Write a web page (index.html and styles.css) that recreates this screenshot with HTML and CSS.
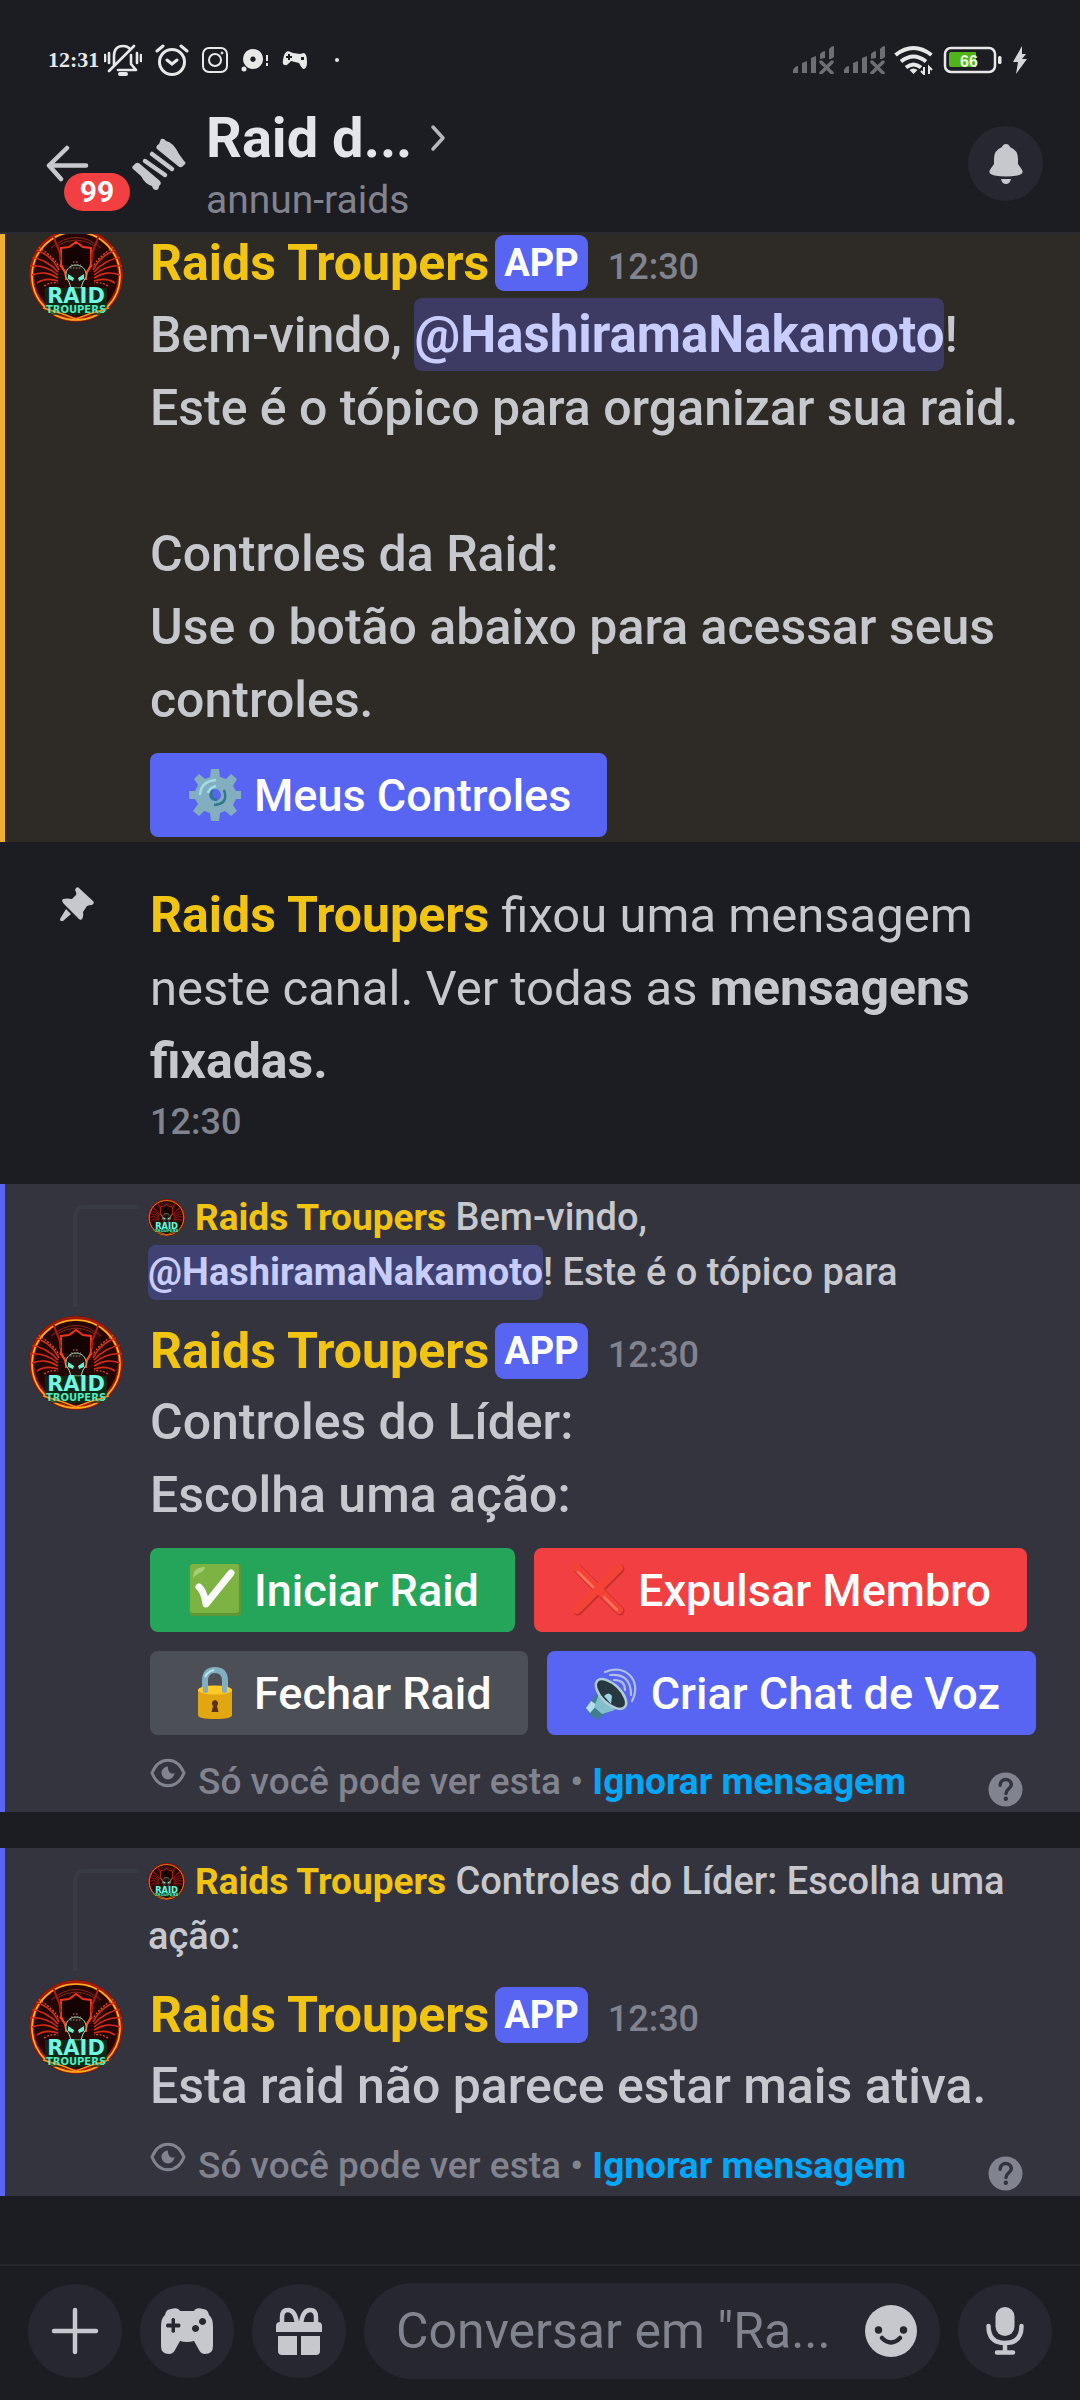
FILE: index.html
```html
<!DOCTYPE html>
<html lang="pt-BR">
<head>
<meta charset="utf-8">
<meta name="viewport" content="width=device-width, initial-scale=1">
<title>Raid – annun-raids</title>
<link rel="stylesheet" href="styles.css">
</head>
<body>
<svg class="defs" aria-hidden="true">
  <defs>
    <clipPath id="round"><circle cx="47" cy="47" r="47"/></clipPath>
    <symbol id="avatar" viewBox="0 0 94 94">
      <g clip-path="url(#round)">
        <circle cx="47" cy="47" r="47" fill="#240503"/>
        <circle cx="47" cy="47" r="44.500" fill="none" stroke="#a01a06" stroke-width="5"/>
        <circle cx="47" cy="48" r="44" fill="none" stroke="#ffb01f" stroke-width="1.600"/>
        <path d="M22 20Q47 -1 72 20M28 18Q47 6 66 18" fill="none" stroke="#8a2a10" stroke-width="1"/>
        <path d="M32 20l8-1 7-5 7 5 8 1v14c0 8-6 12-15 18-9-6-15-10-15-18z" fill="#150202" stroke="#f0331c" stroke-width="2"/>
        <path d="M25 9c2 10 8 14 6 24M69 9c-2 10-8 14-6 24" fill="none" stroke="#a61d0e" stroke-width="2"/>
        <path d="M3 20c9 4 18 6 27 22M1 29c9 1 18 4 28 15M1 38c10-1 18 1 28 9M3 47c9-3 16-3 26 3M8 55c6-4 12-5 21-2M91 20c-9 4-18 6-27 22M93 29c-9 1-18 4-28 15M93 38c-10-1-18 1-28 9M91 47c-9-3-16-3-26 3M86 55c-6-4-12-5-21-2" fill="none" stroke="#d42b17" stroke-width="1.600"/>
        <path d="M7 17c10 8 18 12 23 22M87 17c-10 8-18 12-23 22M15 58c5-3 9-4 14-3M79 58c-5-3-9-4-14-3" fill="none" stroke="#e05a32" stroke-width="1.200" stroke-dasharray="2 1.500"/>
        <path d="M31 37q6 5 6 15M63 37q-6 5-6 15" fill="none" stroke="#ff4326" stroke-width="2"/>
        <path d="M37 49c-2-16 22-16 20 0l-3 5-2 6H42l-2-6z" fill="#1f1210" stroke="#8fdcae" stroke-width="1"/>
        <path d="M39 46l6 4-1 3-5-2zM55 46l-6 4 1 3 5-2z" fill="#6ff0cd"/>
        <path d="M41 40h12M42 37h10M44 34h6" stroke="#b98a74" stroke-width="1" stroke-dasharray="1.500 1.500"/>
        <path d="M16 60h62v27H16z" fill="#06381f" opacity=".7"/>
        <path d="M14 80l20 6 13 5 13-5 20-6" fill="none" stroke="#ff8a1c" stroke-width="1.600"/>
        <text x="47" y="75" class="logo-big" text-anchor="middle">RAID</text>
        <text x="47" y="85" class="logo-small" text-anchor="middle">TROUPERS</text>
      </g>
    </symbol>
    <symbol id="eye" viewBox="0 0 36 32">
      <path d="M2 16C9-1 27-1 34 16 27 33 9 33 2 16z" fill="none" stroke="currentColor" stroke-width="3"/>
      <path d="M18 9.500A6.500 6.500 0 1 0 24.500 16c-3 2-7-1-6.500-6.500z" fill="currentColor"/>
    </symbol>
    <symbol id="help" viewBox="0 0 36 36">
      <circle cx="18" cy="18" r="17.500" fill="currentColor"/>
      <path d="M12.500 13.500c0-7.500 11.500-7.500 11.500-.5 0 4-5.500 4.500-5.500 9" fill="none" stroke="#34343e" stroke-width="3.600" stroke-linecap="round"/>
      <circle cx="18.300" cy="27.500" r="2.300" fill="#34343e"/>
    </symbol>
    <symbol id="signal" viewBox="0 0 42 28">
      <path d="M1 27v-3q2-4 5-4v7zM10 27V17l5-2v12zM19 27V12l5-2v17zM28 13V8q2-3 5-3v7zM37 13V3q2-3 5-3v11l-3 2z" fill="currentColor"/>
      <path d="M29 16l11 11M40 16L29 27" stroke="currentColor" stroke-width="3.500" stroke-linecap="round"/>
    </symbol>
  </defs>
</svg>

<div class="app">
  <div class="status">
    <div class="status-left">
      <span class="clock">12:31</span>
      <svg width="38" height="34" viewBox="0 0 38 34" fill="none" stroke="currentColor" stroke-width="2.600" stroke-linecap="round" stroke-linejoin="round"><path d="M10 22V13q0-10 9-10 4 0 6 2M27 12v9l5 6H14M5 28L30 3M1 12v6M5 10v10M33 10v10M37 12v6"/><path d="M16 31h6" stroke-width="4"/></svg>
      <svg width="34" height="32" viewBox="0 0 34 32" fill="none" stroke="currentColor" stroke-width="3" stroke-linecap="round"><circle cx="17" cy="18" r="12.500"/><path d="M12 16l5 4 5-4M2 7l6-5M32 7l-6-5"/></svg>
      <svg width="26" height="26" viewBox="0 0 26 26" fill="none" stroke="currentColor" stroke-width="2"><rect x="1" y="1" width="24" height="24" rx="6"/><circle cx="13" cy="13" r="6"/><circle cx="20" cy="6" r="1" fill="currentColor" stroke-width="1"/></svg>
      <svg width="28" height="24" viewBox="0 0 28 24" fill="currentColor"><path fill-rule="evenodd" d="M12 1a10 10 0 1 0 .1 0zM12 8.500a2.700 2.700 0 1 1-.1 0z"/><circle cx="3" cy="21" r="2.500"/><path d="M25 7h2v6h-2zM25 15h2v3h-2z"/></svg>
      <svg width="26" height="20" viewBox="0 0 26 20" fill="currentColor"><path fill-rule="evenodd" d="M6 1l5 2 7 1 4-1q3 1 3 9 0 6-3 7-2 0-5-6l-8-2q-4 5-6 4-3 0-2-5 1-8 5-9zM6 4v2H4v2h2v2h2V8h2V6H8V4zM19 7h3v3h-3z"/></svg>
      <span class="dot"></span>
    </div>
    <div class="status-right">
      <svg class="signal" width="42" height="28"><use href="#signal"/></svg>
      <svg class="signal" width="42" height="28"><use href="#signal"/></svg>
      <svg width="40" height="30" viewBox="0 0 40 30" fill="none" stroke="currentColor" stroke-width="4"><path d="M1.500 10Q19.500-4 37.500 10M7 16.500q12.500-10 25 0M12 22.500q7.500-6 15 0"/><path d="M19.500 29l-4-4q4-3 8 0z" fill="currentColor" stroke="none"/><path d="M30 22v7l-3-3M35 29v-7l3 3" stroke-width="2"/></svg>
      <svg width="60" height="28" viewBox="0 0 60 28"><rect x="2" y="2" width="50" height="24" rx="6" fill="none" stroke="#e8e8e8" stroke-width="2.500"/><path d="M6 8q0-2 2-2h25v15H8q-2 0-2-2z" fill="#50b419"/><rect x="55" y="10" width="3.500" height="8" rx="1.500" fill="#e8e8e8"/><text x="26" y="21" class="charge" text-anchor="middle">66</text></svg>
      <svg width="16" height="28" viewBox="0 0 16 28" fill="#d5d6da"><path d="M10 0L1 16h5L4 28 15 13h-5L14 8h-4z"/></svg>
    </div>
  </div>

  <header class="topbar">
    <button class="back" aria-label="Voltar">
      <svg width="44" height="38" viewBox="0 0 44 38" fill="none" stroke="currentColor" stroke-width="4.500" stroke-linecap="round" stroke-linejoin="round"><path d="M40 20.500H3M21 3L3 20.500 15 34"/></svg>
      <span class="unread">99</span>
    </button>
    <svg class="thread" width="54" height="54" viewBox="0 0 54 54" fill="none" stroke="currentColor" stroke-linecap="round" stroke-linejoin="round"><path d="M29 2q3-1 5 2 7 1 13 13l5 7q3 2 0 4-3 4-6 1L25 12q-2-3 2-5z" fill="currentColor" stroke="none"/><path d="M2 28q3-4 6-1l20 17q2 3-1 5 0 4-3 4-3 0-4-4-7-2-11-10L1 32q-2-2 1-4z" fill="currentColor" stroke="none"/><path d="M20 17l20 15M13 24l20 14" stroke-width="4.500"/></svg>
    <a class="channel" href="#">
      <span class="title"><strong>Raid d...</strong>
        <svg width="16" height="28" viewBox="0 0 16 28" fill="none" stroke="#b5b7be" stroke-width="3.500" stroke-linecap="round" stroke-linejoin="round"><path d="M3 3l10 11L3 25"/></svg>
      </span>
      <span class="parent">annun-raids</span>
    </a>
    <button class="notify" aria-label="Notificações">
      <svg width="34" height="40" viewBox="0 0 34 40" fill="currentColor"><path d="M17 0q3 0 4 3 8 3 8 12v5l3.500 5q3.500 5-4 6.500-11.500 2-23 0-7.500-1.500-4-6.500L5 20v-5Q5 6 13 3q1-3 4-3zM12 35h10q-1 5-5 5t-5-5z"/></svg>
    </button>
  </header>

  <main class="chat">
    <div class="log">
      <article class="msg pinned">
        <svg class="avatar" role="img" aria-label="Raids Troupers"><use href="#avatar"/></svg>
        <div class="content">
          <div class="head"><strong class="name">Raids Troupers</strong><span class="app-tag">APP</span><time>12:30</time></div>
          <p class="text">Bem-vindo, <span class="keep"><a class="mention" href="#">@HashiramaNakamoto</a>!</span><br>Este é o tópico para organizar sua raid.<br><br>Controles da Raid:<br>Use o botão abaixo para acessar seus controles.</p>
          <div class="components">
            <button class="btn primary">
              <svg width="52" height="52" viewBox="0 0 52 52"><path fill-rule="evenodd" fill="#82aec0" d="M22 0h8l1 8 6 2 5-5 6 5-4 7 3 5 5 0v8h-5l-3 6 4 6-6 5-6-5-5 2-1 8h-8l-1-8-6-2-5 5-6-5 5-7-3-5H0v-8h6l3-6-4-6 5-5 6 5 5-2zM26 20a6 6 0 1 0 .1 0z"/><path d="M11 26q1-14 16-15M19 24q2-6 8-7" fill="none" stroke="#a0dce9" stroke-width="2.500"/><path d="M35 21q5 14-10 15M24 21q-5 8 4 10" fill="none" stroke="#2f7889" stroke-width="2.500"/></svg>
              Meus Controles</button>
          </div>
        </div>
      </article>

      <article class="msg system">
        <svg class="pin" width="34" height="34" viewBox="0 0 34 34" fill="currentColor"><path d="M16 1q2-2 4 1l13 12q2 2-1 4-3 0-5 1l-4 6q1 6-2 8-2 0-4-3l-4-4-9-9Q1 14 3 12q4-1 9 0l4-4q1-2-1-5zM6 22l5 5-8 7q-3 1-3-2z"/></svg>
        <div class="content">
          <p class="text"><strong class="name">Raids Troupers</strong> fixou uma mensagem neste canal. Ver todas as <a class="pins" href="#">mensagens fixadas.</a></p>
          <time>12:30</time>
        </div>
      </article>

      <article class="msg ephemeral">
        <span class="spine"></span>
        <p class="reply"><svg class="mini" role="img" aria-label=""><use href="#avatar"/></svg><strong class="name">Raids Troupers</strong> Bem-vindo, <span class="keep"><a class="mention" href="#">@HashiramaNakamoto</a>!</span> Este é o tópico para</p>
        <svg class="avatar" role="img" aria-label="Raids Troupers"><use href="#avatar"/></svg>
        <div class="content">
          <div class="head"><strong class="name">Raids Troupers</strong><span class="app-tag">APP</span><time>12:30</time></div>
          <p class="text">Controles do Líder:<br>Escolha uma ação:</p>
          <div class="components">
            <button class="btn success">
              <svg width="52" height="52" viewBox="0 0 52 52"><rect width="52" height="52" rx="4" fill="#5f9638"/><rect x="1" width="49" height="49" rx="3" fill="#7db343"/><path d="M4 14Q4 3 16 3q-1 5-6 6-2 1-6 5z" fill="#a6cf7c"/><path d="M10 23q5 4 7 17L42 9" fill="none" stroke="#fafafa" stroke-width="7" stroke-linecap="round" stroke-linejoin="round"/></svg>
              Iniciar Raid</button>
            <button class="btn danger">
              <svg width="52" height="52" viewBox="0 0 52 52" fill="none" stroke-linecap="round"><path d="M5 5l42 42M47 5L5 47" stroke="#c62f2c" stroke-width="9"/><path d="M4 4l42 42M46 4L4 46" stroke="#f44336" stroke-width="8"/><path d="M5 8l15 15M31 33l13 13" stroke="#ff7460" stroke-width="2.500"/></svg>
              Expulsar Membro</button>
            <button class="btn secondary">
              <svg width="52" height="52" viewBox="0 0 52 52"><path d="M16 26V14q0-11 10-11t10 11v12" fill="none" stroke="#82aec0" stroke-width="6"/><path d="M16 10q3-6 9-7" stroke="#b9e4ea" stroke-width="2" fill="none"/><path d="M9 23v25q0 4 17 4t17-4V23z" fill="#e2a610"/><ellipse cx="26" cy="23" rx="17" ry="4.500" fill="#ffca28"/><path d="M14 19h5v6q-2 2-5 0zM33 19h5v6q-3 2-5 0z" fill="#82aec0"/><path d="M26 33a3.500 3.500 0 0 1 2 6l1.500 6h-7l1.500-6a3.500 3.500 0 0 1 2-6z" fill="#5a3018"/></svg>
              Fechar Raid</button>
            <button class="btn primary">
              <svg width="52" height="52" viewBox="0 0 52 52"><path d="M12 25L0 41q3 9 12 11l14-10z" fill="#417f90"/><path d="M5 34l-5 7 4 5 7-8z" fill="#b3dfe8"/><path d="M13 27L8 40l8 7 13-4z" fill="#82c0cc"/><ellipse cx="25" cy="27" rx="19" ry="9.500" transform="rotate(44 25 27)" fill="#283840" stroke="#b0ccd6" stroke-width="2.500"/><path d="M18 29q5-5 8 0l-1 8z" fill="#9fd6e2"/><path d="M28 13q11 0 11 10M24 8q21-2 21 20M19 5C38-4 57 13 46 34" fill="none" stroke="#b0bfe4" stroke-width="2.200" stroke-linecap="round"/></svg>
              Criar Chat de Voz</button>
          </div>
          <div class="only-you"><svg class="eye"><use href="#eye"/></svg><span>Só você pode ver esta • <a href="#">Ignorar mensagem</a></span><button class="help" aria-label="Ajuda"><svg width="35" height="35"><use href="#help"/></svg></button></div>
        </div>
      </article>

      <article class="msg ephemeral">
        <span class="spine"></span>
        <p class="reply"><svg class="mini" role="img" aria-label=""><use href="#avatar"/></svg><strong class="name">Raids Troupers</strong> Controles do Líder: Escolha uma ação:</p>
        <svg class="avatar" role="img" aria-label="Raids Troupers"><use href="#avatar"/></svg>
        <div class="content">
          <div class="head"><strong class="name">Raids Troupers</strong><span class="app-tag">APP</span><time>12:30</time></div>
          <p class="text">Esta raid não parece estar mais ativa.</p>
          <div class="only-you"><svg class="eye"><use href="#eye"/></svg><span>Só você pode ver esta • <a href="#">Ignorar mensagem</a></span><button class="help" aria-label="Ajuda"><svg width="35" height="35"><use href="#help"/></svg></button></div>
        </div>
      </article>
    </div>
  </main>

  <footer class="composer">
    <button class="round" aria-label="Adicionar"><svg width="48" height="48" viewBox="0 0 48 48" stroke="currentColor" stroke-width="4.500" stroke-linecap="round"><path d="M24 3v42M3 24h42"/></svg></button>
    <button class="round" aria-label="Atividades"><svg width="52" height="46" viewBox="0 0 52 46" fill="currentColor"><path fill-rule="evenodd" d="M10 1q7-2 9 2h14q2-4 9-2 5 0 6 6 4 3 4 12v19q0 8-8 8-4 0-6-4l-5-9q-7 2-14 0l-5 9q-2 4-6 4-8 0-8-8V19q0-9 4-12 1-6 6-6zM10.500 11v4.500H6q-2 2 0 4h4.500V24q1.500 1.500 3.500 0v-4.500h4.500q2-2 0-4H14V11q-2-2-3.500 0zM41.500 10a3.500 3.500 0 1 0 .1 0zM34.500 17a3.500 3.500 0 1 0 .1 0z"/></svg></button>
    <button class="round" aria-label="Enviar presente"><svg width="48" height="48" viewBox="0 0 48 48" fill="currentColor"><path d="M22 16Q20 3 13 3 7 3 7 10v5M26 16q2-13 9-13 6 0 6 7v5" fill="none" stroke="currentColor" stroke-width="4.500"/><path d="M5 15h38q4 0 4 4v6H1v-6q0-4 4-4zM3 29h19v19H7q-4 0-4-4zM26 29h19v15q0 4-4 4H26z"/></svg></button>
    <div class="field">
      <input type="text" aria-label="Mensagem" placeholder="Conversar em &quot;Ra...">
      <button class="emoji" aria-label="Emoji"><svg width="52" height="52" viewBox="0 0 52 52"><circle cx="26" cy="26" r="26" fill="currentColor"/><circle cx="13.500" cy="25" r="3.700" fill="#26272f"/><circle cx="38.500" cy="25" r="3.700" fill="#26272f"/><path d="M17 33q9 9 18 0" fill="none" stroke="#26272f" stroke-width="4.500" stroke-linecap="round"/></svg></button>
    </div>
    <button class="round" aria-label="Mensagem de voz"><svg width="40" height="48" viewBox="0 0 40 48" fill="currentColor"><rect x="10.500" y="0" width="19" height="29" rx="9.500"/><path d="M3.500 19q0 17 16.500 17t16.500-17M20 36v9M12 45.500h16" fill="none" stroke="currentColor" stroke-width="4.500" stroke-linecap="round"/></svg></button>
  </footer>
</div>
</body>
</html>
```
FILE: styles.css
```css
* { box-sizing: border-box; }

body {
  margin: 0;
  background: #1c1d22;
  color: #c7c8ce;
  font-family: Roboto, "Liberation Sans", sans-serif;
  font-weight: 500;
}

p { margin: 0; }
a { color: inherit; text-decoration: none; }
svg { display: block; flex: none; }

button {
  margin: 0;
  padding: 0;
  border: 0;
  background: none;
  color: inherit;
  font: inherit;
  cursor: pointer;
}

.defs { position: absolute; width: 0; height: 0; }

.app { display: flex; flex-direction: column; min-height: 100vh; }

/* Status bar */
.status {
  display: flex;
  justify-content: space-between;
  align-items: center;
  height: 95px;
  padding: 25px 52px 0 48px;
  color: #e8e8e8;
}
.status-left, .status-right { display: flex; align-items: center; }
.status-left { gap: 13px; }
.status-right { gap: 9px; }
.clock { font: bold 22px/28px "Liberation Serif", serif; margin-right: -8px; }
.dot { width: 4px; height: 4px; margin-left: 14px; border-radius: 2px; background: currentColor; }
.signal { color: #6d6e73; }
.charge { font: bold 16px "Liberation Sans", sans-serif; fill: #e9ffe0; }

/* Channel header */
.topbar {
  display: flex;
  align-items: center;
  height: 139px;
  padding: 0 37px 0 46px;
  border-bottom: 2px solid #2a2b30;
}
.back { position: relative; width: 86px; }
.unread {
  position: absolute;
  left: 18px;
  top: 28px;
  width: 66px;
  border-radius: 19px;
  background: #f23f42;
  color: #fff;
  font-size: 30px;
  font-weight: 700;
  line-height: 38px;
}
.thread { margin-right: 20px; }
.channel { flex: 1; }
.title, .parent { display: block; }
.title { display: flex; align-items: center; gap: 18px; font-size: 56px; line-height: 72px; color: #e3e5ea; }
.title strong { font-weight: 700; }
.parent { font-size: 39px; font-weight: 400; line-height: 52px; color: #81838f; }
.notify {
  display: grid;
  place-items: center;
  width: 75px;
  height: 75px;
  border-radius: 50%;
  background: #26272f;
}

/* Message log, scrolled partly under the header */
.chat { flex: 1; overflow: hidden; }
.log { margin-top: -6px; }

.msg {
  display: grid;
  grid-template-columns: 121px 1fr;
  padding: 0 40px 5px 24px;
  border-left: 5px solid transparent;
}
.msg.pinned { border-color: #f0b132; background: #2e2a26; }
.msg.ephemeral { padding-top: 6px; border-color: #5865f2; background: #34343e; }
.msg.ephemeral + .ephemeral { margin-top: 36px; }
.msg.system { padding-top: 37px; padding-bottom: 37px; }

.avatar { width: 94px; height: 94px; }
.logo-big { font: bold 21px "DejaVu Sans", sans-serif; fill: #6ff7e2; }
.logo-small { font: bold 10px "DejaVu Sans", sans-serif; fill: #4fecc0; }

.head { display: flex; align-items: center; height: 70px; font-size: 50px; line-height: 70px; }
.name { font-weight: 700; color: #f0c411; }
.app-tag {
  margin: 0 20px 0 6px;
  padding: 0 9px;
  border-radius: 9px;
  background: #5865f2;
  color: #fff;
  font-size: 38px;
  font-weight: 700;
  line-height: 56px;
}
time { display: block; font-size: 36px; line-height: 49px; color: #81838f; }
.head time { padding-top: 8px; }

.text { font-size: 50px; line-height: 73px; }
.keep { white-space: nowrap; }
.mention {
  display: inline-block;
  border-radius: 8px;
  background: #3d3a63;
  color: #c9cdfb;
  font-weight: 700;
}
.text .mention { font-size: 51px; }
.ephemeral .mention { background: #404273; }

.system .text { font-size: 49px; font-weight: 400; }
.system .name, .pins { font-size: 50px; font-weight: 700; }
.pin { margin: 8px 0 0 31px; }

.spine {
  height: 102px;
  margin: 15px 11px 0 44px;
  border: solid #383b44;
  border-width: 4px 0 0 4px;
  border-radius: 10px 0 0 0;
}
.reply { min-height: 110px; margin: 0 0 16px -2px; font-size: 38px; line-height: 55px; }
.reply .name { font-size: 37px; }
.mini { display: inline-block; width: 37px; height: 37px; margin-right: 10px; vertical-align: -6px; }

.components { display: flex; flex-wrap: wrap; gap: 19px; margin-top: 16px; }
.btn {
  display: flex;
  align-items: center;
  gap: 13px;
  height: 84px;
  padding: 0 36px 0 39px;
  border-radius: 8px;
  color: #fff;
  font-size: 45px;
  white-space: nowrap;
}
.primary { background: #5865f2; }
.success { background: #24a55a; }
.danger { background: #f23f42; }
.secondary { background: #4d4f57; }

.only-you {
  display: flex;
  height: 50px;
  margin-top: 18px;
  color: #81838f;
  font-size: 37px;
  line-height: 50px;
}
.components + .only-you { margin-top: 22px; }
.only-you a { color: #00a8fc; font-weight: 700; }
.eye { width: 36px; height: 32px; margin-right: 12px; }
.help { align-self: flex-end; margin: 0 17px 0 auto; }

/* Composer */
.composer {
  display: flex;
  align-items: center;
  gap: 18px;
  height: 136px;
  padding: 0 28px 4px;
  border-top: 2px solid #26272c;
}
.round {
  display: grid;
  place-items: center;
  flex: none;
  width: 94px;
  height: 94px;
  border-radius: 50%;
  background: #26272f;
}
.field {
  display: flex;
  align-items: center;
  flex: 1;
  min-width: 0;
  height: 96px;
  padding: 0 23px 0 32px;
  border-radius: 48px;
  background: #26272f;
}
.field input {
  flex: 1;
  min-width: 0;
  padding: 0;
  border: 0;
  outline: 0;
  background: none;
  color: inherit;
  font: inherit;
  font-size: 50px;
  font-weight: 400;
}
.field input::placeholder { color: #81838f; opacity: 1; }
```
